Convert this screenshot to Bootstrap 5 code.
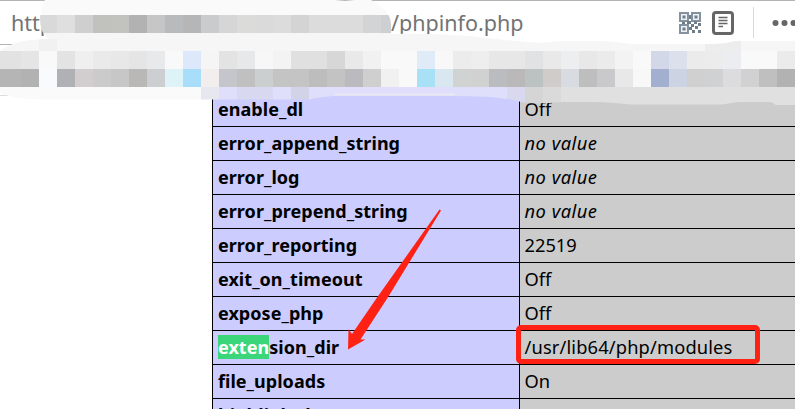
<!DOCTYPE html>
<html lang="en">
<head>
<meta charset="utf-8">
<title>phpinfo()</title>
<link href="https://cdn.jsdelivr.net/npm/bootstrap@5.3.0/dist/css/bootstrap.min.css" rel="stylesheet">
<style>
body{font-family:"Noto Sans","Open Sans",sans-serif;height:409px;background:#fff;color:#000}
.urlbar{height:45px;border-top:1px solid #b4b4b4;border-bottom:1px solid #b4b4b4;padding-left:11px}
.url{font-size:21.5px;line-height:43px;color:#737373;white-space:pre}
.url-host{width:380px}
.tools{width:116px}
.reader{margin-left:11px}
.dots{margin-left:17px}
.sep{width:1px;height:31px;background:#d9d9d9;margin-left:19px}
.toolbar-rule{height:51px;border-bottom:1px solid #ddd}
.info{height:316px;margin-left:212px;margin-top:-3px;border-left:1px solid #000}
.info-row{height:34px;border-bottom:1px solid #000}
.info-key{width:306px;background:#ccf;font-weight:700;font-size:18px;letter-spacing:.04px;line-height:33px;padding-left:5px;white-space:nowrap}
.info-val{background:#ccc;border-left:1px solid #000;font-size:18.3px;line-height:32px;padding-left:4.5px;white-space:nowrap}
.info-val i{letter-spacing:.5px}
.path{letter-spacing:.15px}
.hit{background:#3bd679;color:#fff}
.overlay{left:0;top:0;pointer-events:none}
</style>
<script src="https://cdn.jsdelivr.net/npm/bootstrap@5.3.0/dist/js/bootstrap.bundle.min.js"></script>
</head>
<body class="position-relative overflow-hidden">
<header class="urlbar d-flex align-items-center">
 <span class="url url-host flex-shrink-0">http://</span>
 <span class="url flex-grow-1">/phpinfo.php</span>
 <div class="tools d-flex align-items-center flex-shrink-0">
  <svg width="22" height="22" viewBox="0 0 22 22" class="flex-shrink-0">
   <g fill="#eef1f4" stroke="#8492a0" stroke-width="2"><path d="M1 1h8v8H1zM13 1h8v8h-8zM1 13h8v8H1z"/></g>
   <path fill="#6f7d8a" d="M3.500 3.500h3v3h-3zM15.500 3.500h3v3h-3zM3.500 15.500h3v3h-3zM10 3h2v4h-2zM3 10h3v2H3zM8 9h4v3H8zM12 12h3v3h-3zM15 9.500h3v2.500h-3zM19 11h3v3h-3zM16 14h3v3h-3zM10 15h3v3h-3zM13 18h3v3h-3zM19 18h3v3h-3z"/>
  </svg>
  <svg width="22" height="24" viewBox="0 0 22 24" class="reader flex-shrink-0">
   <rect x="1.500" y="1.500" width="19" height="21" rx="2.500" fill="#fff" stroke="#666" stroke-width="3"/>
   <path d="M6.500 6.500h9M6.500 9.500h9M6.500 12.500h9M6.500 15.500h4.500" stroke="#666" stroke-width="1.300"/>
  </svg>
  <span class="sep flex-shrink-0"></span>
  <svg width="25" height="8" class="dots flex-shrink-0" fill="#666"><circle cx="4.500" cy="4" r="3"/><circle cx="13.500" cy="4" r="3"/><circle cx="22.500" cy="4" r="3"/></svg>
 </div>
</header>
<div class="toolbar-rule"></div>
<main class="info overflow-hidden" id="info"></main>

<svg class="overlay position-absolute" width="795" height="409" viewBox="0 0 795 409">
 <defs>
  <clipPath id="blob"><path d="M45 0H335L345 1L355 0H371Q391 10 391 25V34Q430 33 470 36Q510 41 540 43Q552 41 570 41H600Q618 42 631 44H716Q726 44 735 41H795V105H776L771 102H738L722 104.500H630Q610 102 595 102H561Q545 104 525 103Q508 98 490 97Q470 96 450 96H335Q318 97 310 99.500H40Q15 99 0 93V51Q15 40 38 39.500L48 39Q40 32 40 18Q41 5 45 0Z"/></clipPath>
 </defs>
 <g clip-path="url(#blob)" id="mosaic" shape-rendering="crispEdges"></g>
 <path d="M335 94.500H455" stroke="#ebebee" stroke-width="1.500"/>
 <path d="M439.500 209.500L441 210.500L388.300 296.700L360.500 339.500L365.500 339.500L348 349.500L348.500 329.300L352 334L377.600 296.700Z" fill="#ff2114"/>
 <rect x="518.500" y="327.500" width="239" height="34" rx="2.500" fill="none" stroke="#ff2114" stroke-width="5"/>
</svg>
<script>
const rows=[["enable_dl","Off"],["error_append_string","<i>no value</i>"],["error_log","<i>no value</i>"],["error_prepend_string","<i>no value</i>"],["error_reporting","22519"],["exit_on_timeout","Off"],["expose_php","Off"],['<span class="hit">exten</span>sion_dir','<span class="path">/usr/lib64/php/modules</span>'],["file_uploads","On"],["highlight.bg",'<span class="text-white">#FFFFFF</span>']];
document.getElementById("info").innerHTML=rows.map(r=>`<div class="info-row d-flex"><div class="info-key flex-shrink-0">${r[0]}</div><div class="info-val flex-grow-1">${r[1]}</div></div>`).join("");

// pixelated censor strip: 18px cells
const cell=(x,y,w,h,c)=>`<rect x="${x}" y="${y}" width="${w}" height="${h}" fill="#${c}"/>`;
let out=cell(0,0,795,15,"fafafa")+cell(0,15,795,36,"f6f6f6")+cell(39,39,18,12,"f1f1f1")+cell(705,41,36,10,"ededed");
const strip=(x,y,s)=>s.split(" ").forEach((c,i)=>out+=cell(x+i*18,y,18,18,c));
strip(39,15,"d9d9d9 dfdfdf cfcfcf c1c1be c2c2bf b2b2b2 c6c6c6 b8babc b6b6b6 c9cbcd d6d6d6 dbdbd9 dadada dcdcdc d4d4d4 dcdcdc dcdcdc dcdcdc d3d4d5 cdcfd1");
strip(-15,51,"e2e2e2 e2e2e2 e5e5e5 f9f9f9 e3e3e3 efefef eaeaea e8e8e8 e5e5e5 e8e9ea f9f9f9 dde9fb f5f5f5 e3e3e3 e7e8e9 f7f7f7 f3f3f3 e0e0e0 e0e0e0 d7d7d7 e9e9e9 f1f1f1 f9f9f9 f9f9f9 e0ebf8 f8f8f8 ececec eeeeee e7e7e7 e7e7e7 e1e2e3 e9e9e9 eceef0 e8e8e8 ebebeb f3f3f3 f9f9f9 d2d8e8 dbe0ec ebebeb ececec ecedf0 f9f9f9 f9f9f9 ebebeb");
strip(-15,69,"b5b5b5 b5b5b5 b2b2b2 f8fafd b0b1b5 d2cecf cbcbcb c7c7c7 bab8b6 cdced2 ddf3f8 a9defb f2eeed c5c6cb c0c0c0 cccfd0 c4c4c4 c4c4c4 bdbdbd c3c3c3 bbbbbf cfcfcf f1f1f1 f9f9f9 a8e1f6 d9e8f0 d1d2d2 d1d1d1 babcc0 bbb8b9 bcc2c2 d0ccca d8dce2 bebebe c9c9cb e8e8e8 f8f8f8 a2afce ccd3e3 d0d0d0 cfd1d3 dcdcde d1d1d1 bfbfbf b2b2b2");
strip(-15,87,"fafafa ".repeat(12)+"e7e7f0 dfdffb d8d8f0 d8d8f0 dfdffb d3d3e8 "+"dfdffb ".repeat(11)+"d8d8ee d5d5d5 dadada"+" e0e0e0".repeat(13));
document.getElementById("mosaic").innerHTML=out;
</script>
</body>
</html>
